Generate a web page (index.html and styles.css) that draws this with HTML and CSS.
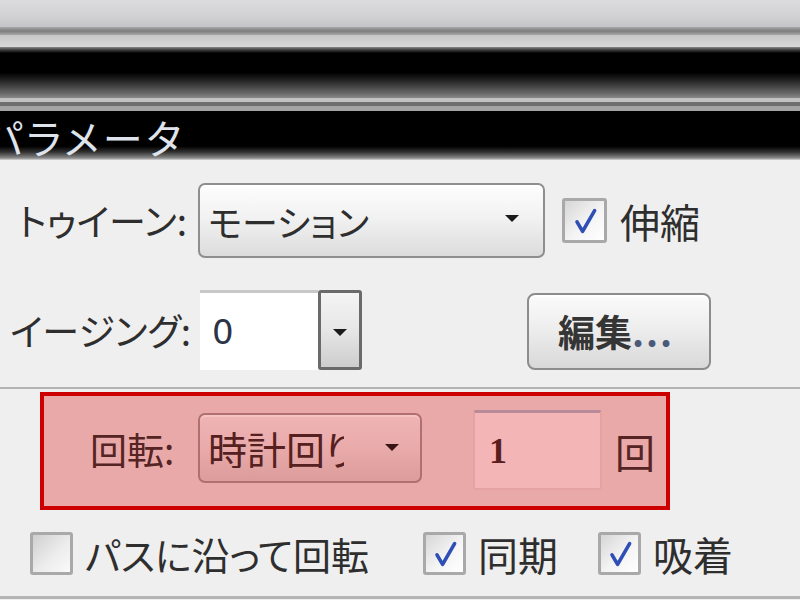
FILE: index.html
```html
<!DOCTYPE html>
<html lang="ja">
<head>
<meta charset="utf-8">
<title>パラメータ</title>
<link rel="stylesheet" href="styles.css">
</head>
<body>
<div class="screen">
  <div class="chrome">
    <div class="bar bar-a"></div>
    <div class="bar bar-b"></div>
    <div class="bar bar-c"></div>
    <div class="bar bar-d"></div>
    <div class="bar bar-e"></div>
    <div class="bar bar-f"></div>
    <div class="bar bar-g"></div>
    <div class="titlebar"><span class="title">パラメータ</span></div>
  </div>
  <div class="panel">
    <div class="row row-tween">
      <span class="label label-tween">トゥイーン:</span>
      <div class="select select-tween"><span class="select-text">モーション</span><span class="arrow"></span></div>
      <span class="checkbox checkbox-scale"><svg viewBox="0 0 40 40" class="tick"><path d="M10 21 L17 33 L32 7" /></svg></span>
      <span class="check-label">伸縮</span>
    </div>
    <div class="row row-ease">
      <span class="label label-ease">イージング:</span>
      <div class="numfield"><span class="num">0</span></div>
      <div class="spin"><span class="arrow"></span></div>
      <div class="btn">編集<span class="dots">...</span></div>
    </div>
    <div class="separator"></div>
    <div class="highlight">
      <span class="label label-rotate">回転:</span>
      <div class="select select-rotate"><span class="select-text">時計回り</span><span class="arrow"></span></div>
      <div class="numfield numfield-rot"><span class="num">1</span></div>
      <span class="unit">回</span>
    </div>
    <div class="row row-opts">
      <div class="opt opt-path">
        <span class="checkbox checkbox-off"></span>
        <span class="check-label">パスに沿って回転</span>
      </div>
      <div class="opt opt-sync">
        <span class="checkbox"><svg viewBox="0 0 40 40" class="tick"><path d="M10 21 L17 33 L32 7" /></svg></span>
        <span class="check-label">同期</span>
      </div>
      <div class="opt opt-snap">
        <span class="checkbox"><svg viewBox="0 0 40 40" class="tick"><path d="M10 21 L17 33 L32 7" /></svg></span>
        <span class="check-label">吸着</span>
      </div>
    </div>
    <div class="bottom-line"></div>
  </div>
</div>
</body>
</html>
```

FILE: styles.css
```css
* { box-sizing: border-box; }

html, body {
  margin: 0;
  padding: 0;
}

body {
  width: 800px;
  height: 600px;
  overflow: hidden;
  background: #efefef;
  font-family: "Noto Sans CJK JP", "Noto Sans", sans-serif;
  font-feature-settings: "palt";
  color: #2e2e2e;
}

.screen {
  width: 800px;
  height: 600px;
  display: flex;
  flex-direction: column;
}

/* ---------- window chrome ---------- */
.chrome {
  height: 160px;
  display: flex;
  flex-direction: column;
}

.bar { width: 100%; flex: none; }
.bar-a { height: 27px; background: linear-gradient(#dcdcde, #d2d2d4 60%, #c4c4c6); }
.bar-b { height: 8px; background: linear-gradient(#a8a8a8, #7c7c7c 50%, #a8a8a8); }
.bar-c { height: 12px; background: linear-gradient(#c6c6c6, #dadada); }
.bar-d { height: 51px; background: linear-gradient(#8a8a8a 0, #3a3a3a 6%, #000 12%, #000 50%, #222 65%, #666 90%, #888 100%); }
.bar-e { height: 4px; background: #c2c2c2; }
.bar-f { height: 4px; background: #6e6e6e; }
.bar-g { height: 5px; background: #a4a4a4; }

.titlebar {
  height: 49px;
  flex: none;
  background: linear-gradient(#000 0, #000 72%, #333 84%, #8a8a8a 96%, #d8d8d8 100%);
  overflow: hidden;
  display: flex;
  align-items: center;
}

.title {
  margin-left: -15px;
  font-size: 40px;
  line-height: 1;
  color: #dfe3ec;
  letter-spacing: 4px;
  margin-top: 2px;
}

/* ---------- panel ---------- */
.panel {
  flex: 1;
  display: flex;
  flex-direction: column;
  background: #efefef;
}

.row {
  display: flex;
  align-items: center;
  flex: none;
}

.label {
  font-size: 37px;
  line-height: 1;
  white-space: nowrap;
  flex: none;
}

.row-tween {
  margin-top: 23px;
  height: 75px;
  padding-left: 18px;
}
.label-tween { width: 180px; }

.select {
  flex: none;
  display: flex;
  align-items: center;
  border: 2px solid #8e8e8e;
  border-radius: 7px;
  background: linear-gradient(#fdfdfd, #f2f2f2 45%, #dcdcdc);
  box-shadow: inset 0 2px 0 #ffffff;
  overflow: hidden;
}

.select-text {
  font-size: 36px;
  line-height: 1;
  white-space: nowrap;
  overflow: hidden;
  color: #2e2e2e;
}

.select-tween {
  width: 347px;
  height: 75px;
  padding-left: 8px;
}
.select-tween .select-text { flex: 1; }

.arrow {
  flex: none;
  width: 0;
  height: 0;
  border-left: 7px solid transparent;
  border-right: 7px solid transparent;
  border-top: 7px solid #1a1a1a;
}

.select-tween .arrow { margin-right: 24px; margin-top: -4px; }

.checkbox {
  flex: none;
  width: 45px;
  height: 45px;
  border: 3px solid #a9a9a9;
  border-radius: 3px;
  background: linear-gradient(135deg, #d6d6d6, #f4f4f4 55%, #ffffff);
  display: flex;
  align-items: center;
  justify-content: center;
}

.tick {
  width: 32px;
  height: 32px;
}
.tick path {
  fill: none;
  stroke: #2f4fb6;
  stroke-width: 4.5;
  stroke-linecap: round;
  stroke-linejoin: round;
}

.checkbox-scale { margin-left: 17px; }

.check-label {
  font-size: 40px;
  line-height: 1;
  white-space: nowrap;
  margin-left: 13px;
  color: #2e2e2e;
}

/* easing row */
.row-ease {
  margin-top: 32px;
  height: 80px;
  padding-left: 10px;
  align-items: stretch;
}
.row-ease .label { width: 190px; align-self: center; }

.numfield {
  flex: none;
  width: 118px;
  height: 80px;
  background: #ffffff;
  border-top: 3px solid #c8c8c8;
  display: flex;
  align-items: center;
  padding-left: 12px;
}

.num {
  font-family: "DejaVu Sans", "Liberation Sans", sans-serif;
  font-size: 34px;
  line-height: 1;
  color: #2c3346;
}

.spin {
  flex: none;
  width: 44px;
  height: 80px;
  border: 3px solid #6a6a6a;
  border-radius: 3px;
  background: linear-gradient(#f4f4f4, #e6e6e6 50%, #cdcdcd);
  display: flex;
  align-items: center;
  justify-content: center;
}
.spin .arrow { margin-top: 4px; }

.btn {
  flex: none;
  margin-left: 165px;
  margin-top: 3px;
  width: 184px;
  height: 77px;
  border: 2px solid #8c8c8c;
  border-radius: 8px;
  background: linear-gradient(#fbfbfb, #ececec 50%, #d8d8d8);
  box-shadow: inset 0 2px 0 #ffffff;
  display: flex;
  align-items: center;
  justify-content: center;
  font-size: 37px;
  font-weight: bold;
  color: #353535;
  line-height: 1;
  padding-right: 6px;
}
.dots { color: #4a5a78; letter-spacing: 2px; }

.separator {
  flex: none;
  margin-top: 17px;
  height: 2px;
  background: #b4b4b4;
}

/* highlighted rotation row */
.highlight {
  flex: none;
  margin-top: 3px;
  margin-left: 40px;
  width: 630px;
  height: 118px;
  border: 4px solid #cc0000;
  background: #eaa9a9;
  display: flex;
  align-items: center;
  padding-left: 46px;
}

.label-rotate {
  width: 108px;
  color: #552424;
  margin-top: -4px;
}

.select-rotate {
  width: 224px;
  height: 70px;
  margin-top: -6px;
  padding-left: 8px;
  border-color: #b07070;
  background: linear-gradient(#f0b4b4, #e9aaaa 50%, #dc9c9c);
  box-shadow: inset 0 2px 0 #f6c4c4;
}
.select-rotate .select-text {
  width: 136px;
  flex: none;
  font-size: 39px;
  color: #552020;
}
.select-rotate .arrow {
  margin-left: 41px;
  border-top-color: #3a1414;
  margin-top: -2px;
}

.numfield-rot {
  width: 129px;
  height: 80px;
  margin-left: 51px;
  margin-top: -2px;
  background: #f3b5b5;
  border: 2px solid #e6a2a2;
  border-top: 3px solid #b88a9a;
  border-radius: 3px;
  padding-left: 14px;
}
.numfield-rot .num {
  font-family: "Liberation Serif", "DejaVu Serif", serif;
  font-weight: bold;
  color: #5a1e1e;
  font-size: 36px;
}

.unit {
  margin-left: 13px;
  font-size: 40px;
  line-height: 1;
  color: #552424;
}

/* options row */
.row-opts {
  margin-top: 22px;
  height: 43px;
  padding-left: 30px;
}

.opt {
  display: flex;
  align-items: center;
  flex: none;
}
.opt .checkbox { width: 43px; height: 43px; }
.opt .check-label { margin-left: 12px; }
.opt-path .check-label { font-size: 38px; }
.opt-path { width: 393px; }
.opt-sync { width: 175px; }
.checkbox-off { background: linear-gradient(135deg, #cfcfcf, #ececec 55%, #fafafa); }

.bottom-line {
  flex: none;
  margin-top: 21px;
  height: 3px;
  background: #b4b4b4;
}
```
